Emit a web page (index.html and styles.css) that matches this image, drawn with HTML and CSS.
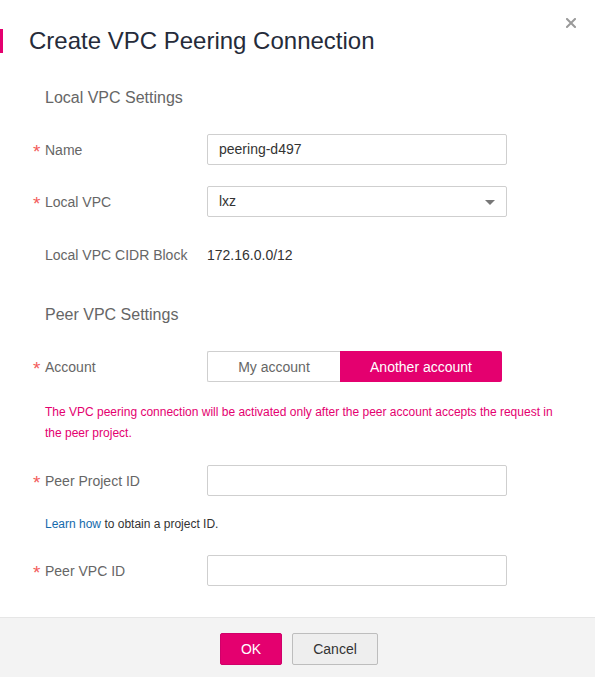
FILE: index.html
```html
<!DOCTYPE html>
<html>
<head>
<meta charset="utf-8">
<link rel="stylesheet" href="styles.css">
</head>
<body>
<div class="dialog">
  <div class="header">
    <span class="accent"></span>
    <h1 class="title">Create VPC Peering Connection</h1>
    <span class="close">
      <svg width="10" height="10" viewBox="0 0 10 10"><path d="M1 1L9 9M9 1L1 9" stroke="#9a9a9a" stroke-width="2" stroke-linecap="square"/></svg>
    </span>
  </div>
  <div class="body">
    <div class="section sec1">Local VPC Settings</div>
    <div class="row r-name">
      <div class="label"><span class="star">*</span>Name</div>
      <div class="input">peering-d497</div>
    </div>
    <div class="row r-vpc">
      <div class="label"><span class="star">*</span>Local VPC</div>
      <div class="input select">lxz<span class="arrow"></span></div>
    </div>
    <div class="row r-cidr">
      <div class="label"><span class="star blank"></span>Local VPC CIDR Block</div>
      <div class="value">172.16.0.0/12</div>
    </div>
    <div class="section sec2">Peer VPC Settings</div>
    <div class="row r-acc">
      <div class="label"><span class="star">*</span>Account</div>
      <div class="toggle">
        <span class="seg seg-my">My account</span>
        <span class="seg seg-other">Another account</span>
      </div>
    </div>
    <div class="notice">The VPC peering connection will be activated only after the peer account accepts the request in the peer project.</div>
    <div class="row r-proj">
      <div class="label"><span class="star">*</span>Peer Project ID</div>
      <div class="input"></div>
    </div>
    <div class="hint"><a class="link">Learn how</a> to obtain a project ID.</div>
    <div class="row r-peer">
      <div class="label"><span class="star">*</span>Peer VPC ID</div>
      <div class="input"></div>
    </div>
  </div>
  <div class="footer">
    <button class="btn btn-ok">OK</button>
    <button class="btn btn-cancel">Cancel</button>
  </div>
</div>
</body>
</html>
```

FILE: styles.css
```css
* { box-sizing: border-box; }
html, body { margin: 0; padding: 0; background: #fff; }
body { font-family: "Liberation Sans", Arial, sans-serif; color: #333; }

.dialog { width: 595px; height: 677px; display: flex; flex-direction: column; }

.header { position: relative; height: 65px; padding-top: 29px; display: flex; align-items: flex-start; }
.accent { width: 3px; height: 24px; background: #e4006f; }
.title { margin: 0 0 0 26px; font-size: 24px; line-height: 24px; font-weight: normal; color: #252b3a; }
.close { position: absolute; left: 566px; top: 18px; width: 10px; height: 10px; display: block; }
.close svg { display: block; }

.body { flex: 1; display: flex; flex-direction: column; }

.section { padding-left: 45px; font-size: 16px; line-height: 20px; color: #666; }
.sec1 { margin-top: 23px; }
.sec2 { margin-top: 35px; }

.row { display: flex; align-items: center; height: 31px; }
.r-name { margin-top: 26px; }
.r-vpc { margin-top: 21px; }
.r-cidr { margin-top: 23px; height: 30px; }
.r-acc { margin-top: 26px; }
.r-proj { margin-top: 21px; }
.r-peer { margin-top: 21px; }

.label { width: 207px; padding-left: 33px; font-size: 14px; color: #666; display: flex; align-items: center; }
.star { display: inline-block; width: 12px; color: #f35b5b; font-size: 19px; line-height: 14px; padding-top: 5px; }

.input { width: 300px; height: 31px; border: 1px solid #cfcfcf; border-radius: 2px; padding: 0 11px; font-size: 14px; line-height: 29px; color: #333; position: relative; }
.arrow { position: absolute; right: 11px; top: 13px; width: 0; height: 0; border-left: 5px solid transparent; border-right: 5px solid transparent; border-top: 5px solid #777; }
.value { font-size: 14px; color: #333; }

.toggle { display: flex; height: 31px; }
.seg { display: flex; align-items: center; justify-content: center; font-size: 14px; }
.seg-my { width: 133px; border: 1px solid #cfcfcf; border-right: none; border-radius: 2px 0 0 2px; color: #666; background: #fff; }
.seg-other { width: 162px; background: #e4006f; color: #fff; border-radius: 0 2px 2px 0; }

.notice { margin-top: 20px; padding-left: 45px; width: 562px; font-size: 12px; line-height: 21px; color: #e4006f; }
.hint { margin-top: 18px; padding-left: 45px; font-size: 12px; line-height: 20px; color: #333; }
.link { color: #1469ac; text-decoration: none; }

.footer { height: 60px; background: #f3f3f3; border-top: 1px solid #e6e6e6; display: flex; justify-content: center; align-items: flex-start; padding: 15px 0 0 3px; gap: 10px; }
.btn { height: 32px; font-family: "Liberation Sans", Arial, sans-serif; font-size: 14px; border-radius: 2px; padding: 0; cursor: pointer; }
.btn-ok { width: 62px; background: #e4006f; border: 1px solid #d0006a; color: #fff; }
.btn-cancel { width: 86px; background: #eeeeee; border: 1px solid #bdbdbd; color: #333; }
```
